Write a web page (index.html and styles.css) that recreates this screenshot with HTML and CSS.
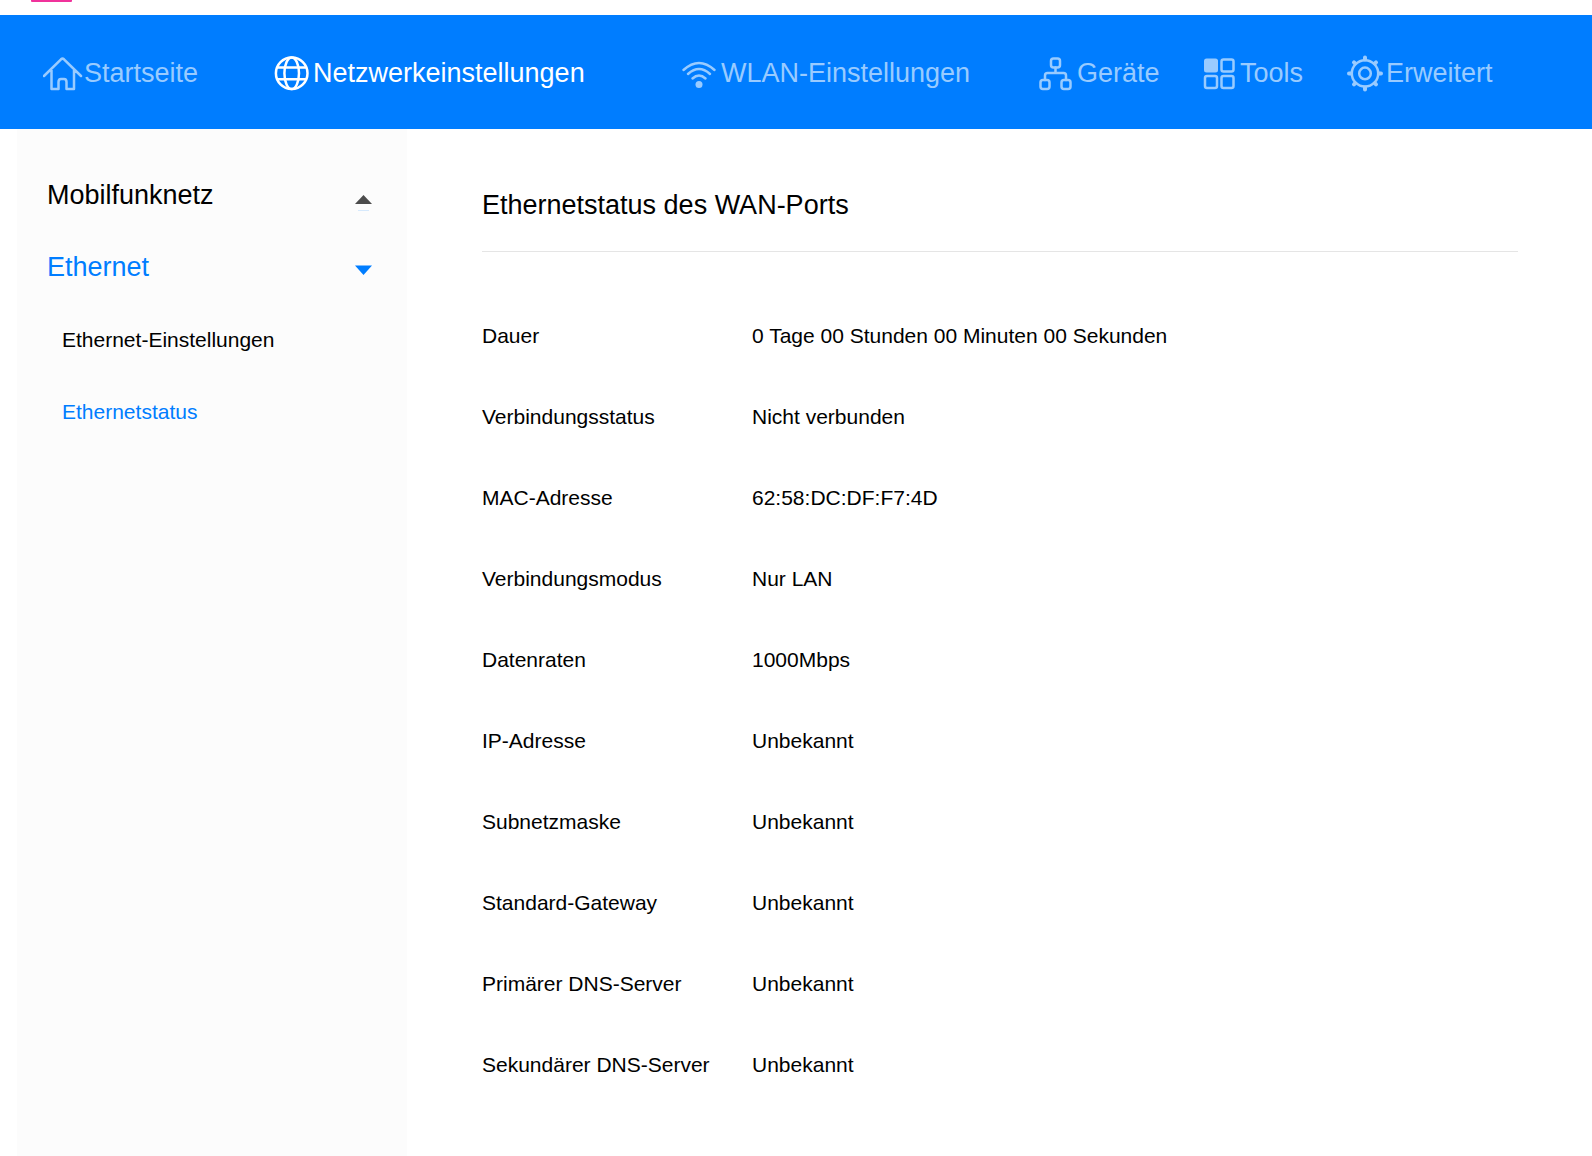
FILE: index.html
```html
<!DOCTYPE html>
<html lang="de">
<head>
<meta charset="utf-8">
<title>Ethernetstatus</title>
<link rel="stylesheet" href="styles.css">
</head>
<body>
<div class="page">
  <div class="brand"><div class="brand-mark"></div></div>
  <nav class="topnav">
    <a class="topnav-item" href="#start">
      <svg class="icon" viewBox="0 0 41 40" aria-hidden="true"><path d="M1 23 18 6.300Q19.500 5 21 6.300L38 23M8.500 17V36H15.500V29Q15.500 26 18 26H21Q23.500 26 23.500 29V36H31V17"/></svg>
      <span>Startseite</span>
    </a>
    <a class="topnav-item active" href="#netz" aria-current="page">
      <svg class="icon" viewBox="0 0 41 40" aria-hidden="true"><circle cx="19.700" cy="20.300" r="15.800"/><ellipse cx="19.700" cy="20.300" rx="7.300" ry="15.800"/><path d="M6 14.500H33.500M6 26.300H33.500"/></svg>
      <span>Netzwerkeinstellungen</span>
    </a>
    <a class="topnav-item" href="#wlan">
      <svg class="icon" viewBox="0 0 41 40" aria-hidden="true"><path d="M3.500 17Q19 3 34.500 17M8 21Q19 11 30 21M12.500 25.500Q19 19.500 25.500 25.500"/><circle class="solid" cx="19" cy="31.500" r="3.500"/></svg>
      <span>WLAN-Einstellungen</span>
    </a>
    <a class="topnav-item" href="#geraete">
      <svg class="icon" viewBox="0 0 41 40" aria-hidden="true"><rect x="15" y="5.500" width="9" height="9" rx="2.500"/><rect x="4.500" y="27" width="9" height="9" rx="2.500"/><rect x="25.500" y="27" width="9" height="9" rx="2.500"/><path d="M19.500 14.500V20M9 27V22.500Q9 20 11.500 20H27.500Q30 20 30 22.500V27"/></svg>
      <span>Geräte</span>
    </a>
    <a class="topnav-item" href="#tools">
      <svg class="icon" viewBox="0 0 41 40" aria-hidden="true"><rect class="solid" x="5" y="5.500" width="14" height="14" rx="2.500"/><rect x="22.500" y="6.500" width="12" height="12" rx="2"/><rect x="6" y="23" width="12" height="12" rx="2"/><rect x="22.500" y="23" width="12" height="12" rx="2"/></svg>
      <span>Tools</span>
    </a>
    <a class="topnav-item" href="#erweitert">
      <svg class="icon" viewBox="0 0 41 40" aria-hidden="true"><circle cx="20" cy="20.400" r="13.200"/><circle cx="20" cy="20.400" r="5.800"/><path class="teeth" d="M20 4.400V6.400M20 34.400V36.400M4 20.400H6M34 20.400H36M9 9.400 10 10.400M30 30.400 31 31.400M9 31.400 10 30.400M30 10.400 31 9.400"/></svg>
      <span>Erweitert</span>
    </a>
  </nav>
  <div class="columns">
    <aside class="sidebar">
      <button class="group" type="button"><span>Mobilfunknetz</span><svg class="caret" viewBox="0 0 18 20" aria-hidden="true"><path class="closed" d="M8.500 4 17 13H0Z"/><path class="trace" d="M3 19.500H14"/></svg></button>
      <button class="group open" type="button" aria-expanded="true"><span>Ethernet</span><svg class="caret" viewBox="0 0 18 20" aria-hidden="true"><path d="M0 2.500H17L8.500 12Z"/></svg></button>
      <div class="submenu">
        <a class="sub" href="#einstellungen">Ethernet-Einstellungen</a>
        <a class="sub current" href="#status" aria-current="page">Ethernetstatus</a>
      </div>
    </aside>
    <main class="content">
      <h1 class="title">Ethernetstatus des WAN-Ports</h1>
      <table class="status">
        <tr><th scope="row">Dauer</th><td>0 Tage 00 Stunden 00 Minuten 00 Sekunden</td></tr>
        <tr><th scope="row">Verbindungsstatus</th><td>Nicht verbunden</td></tr>
        <tr><th scope="row">MAC-Adresse</th><td>62:58:DC:DF:F7:4D</td></tr>
        <tr><th scope="row">Verbindungsmodus</th><td>Nur LAN</td></tr>
        <tr><th scope="row">Datenraten</th><td>1000Mbps</td></tr>
        <tr><th scope="row">IP-Adresse</th><td>Unbekannt</td></tr>
        <tr><th scope="row">Subnetzmaske</th><td>Unbekannt</td></tr>
        <tr><th scope="row">Standard-Gateway</th><td>Unbekannt</td></tr>
        <tr><th scope="row">Primärer DNS-Server</th><td>Unbekannt</td></tr>
        <tr><th scope="row">Sekundärer DNS-Server</th><td>Unbekannt</td></tr>
      </table>
    </main>
  </div>
</div>
</body>
</html>
```
FILE: styles.css
```css
* { box-sizing: border-box; }

body {
  margin: 0;
  background: #fff;
  color: #000;
  font-family: "Liberation Sans", Arial, sans-serif;
  font-size: 21px;
}

a { color: inherit; text-decoration: none; }

.page {
  display: flex;
  flex-direction: column;
  min-height: 100vh;
}

.brand { height: 15px; padding-left: 31px; }

.brand-mark {
  width: 41px;
  height: 2px;
  background: #f0329b;
  border-radius: 0 0 1px 1px;
}

.topnav {
  display: grid;
  grid-template-columns: 229fr 408fr 356fr 163fr 146fr 247fr;
  height: 114px;
  padding-left: 43px;
  background: #007dff;
  color: #99cbff;
  font-size: 27px;
}

.topnav-item {
  display: flex;
  align-items: center;
  height: 116px;
  white-space: nowrap;
}

.topnav-item.active { color: #fff; }

.icon {
  flex: none;
  width: 41px;
  height: 40px;
  fill: none;
  stroke: currentColor;
  stroke-width: 2.5;
  stroke-linejoin: round;
  stroke-linecap: round;
}

.icon .solid { fill: currentColor; stroke: none; }
.icon .teeth { stroke-width: 4; }

.columns { display: flex; flex: 1; padding-left: 17px; }

.sidebar {
  flex: none;
  width: 390px;
  padding: 30px 34px 0 30px;
  background: #fcfcfc;
}

.group {
  display: flex;
  align-items: center;
  justify-content: space-between;
  width: 100%;
  height: 72px;
  padding: 0;
  border: 0;
  background: none;
  color: #000;
  font: 27px "Liberation Sans", Arial, sans-serif;
}

.group.open { color: #007dff; }

.caret {
  width: 18px;
  height: 20px;
  margin-top: 12px;
  fill: currentColor;
}

.caret .closed { fill: #4c4c4c; }
.caret .trace { stroke: #d6e9fc; }

.submenu { padding: 1px 0 0 15px; }
.sub { display: block; line-height: 72px; }
.sub.current { color: #007dff; }

.content { flex: 1; padding: 40px 74px 0 75px; }

.title {
  margin: 0 0 43px;
  padding-bottom: 10px;
  border-bottom: 1px solid #e5e5e5;
  font-size: 27px;
  font-weight: 400;
  line-height: 72px;
}

.status { width: 100%; border-collapse: collapse; }

.status th,
.status td {
  height: 81px;
  padding: 0;
  font-weight: 400;
  text-align: left;
}

.status th { width: 270px; }
```
